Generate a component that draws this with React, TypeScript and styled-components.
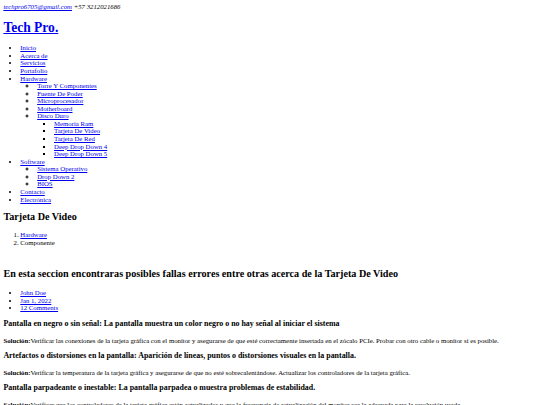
import React from "react";
import styled, { createGlobalStyle } from "styled-components";

const GlobalStyle = createGlobalStyle`
  body {
    margin: 3.4px;
    font-family: "Liberation Serif", "Times New Roman", serif;
    font-size: 6.77px;
    line-height: 1.12;
    color: #000;
    background: #fff;
  }
  a {
    color: #0000ee;
  }
`;

const Contact = styled.address`
  font-style: italic;
`;

const Brand = styled.h1`
  font-size: 2em;
  margin: 0.67em 0;
`;

const Menu = styled.ul`
  margin: 1em 0;
  padding-left: 16.9px;
  list-style: disc;
`;

const SubMenu = styled.ul<{ level: number }>`
  margin: 0;
  padding-left: 16.9px;
  list-style: ${(p) => (p.level === 1 ? "circle" : "square")};
`;

const PageTitle = styled.h2`
  font-size: 1.5em;
  margin: 0.83em 0;
`;

const Breadcrumb = styled.ol`
  margin: 1em 0;
  padding-left: 16.9px;
`;

const Intro = styled.h2`
  font-size: 1.5em;
  margin: 2.17em 0 0.93em;
`;

const MetaList = styled.ul`
  margin: 1em 0;
  padding-left: 16.9px;
`;

const IssueTitle = styled.h3`
  font-size: 1.17em;
  margin: 1em 0;
`;

const Solution = styled.p`
  margin: 1em 0;
`;

type MenuItem = { label: string; children?: MenuItem[] };

const menu: MenuItem[] = [
  { label: "Inicio" },
  { label: "Acerca de" },
  { label: "Servicios" },
  { label: "Portafolio" },
  {
    label: "Hardware",
    children: [
      { label: "Torre Y Componentes" },
      { label: "Fuente De Poder" },
      { label: "Microprocesador" },
      { label: "Motherboard" },
      {
        label: "Disco Duro",
        children: [
          { label: "Memoria Ram" },
          { label: "Tarjeta De Video" },
          { label: "Tarjeta De Red" },
          { label: "Deep Drop Down 4" },
          { label: "Deep Drop Down 5" },
        ],
      },
    ],
  },
  {
    label: "Software",
    children: [
      { label: "Sistema Operativo" },
      { label: "Drop Down 2" },
      { label: "BIOS" },
    ],
  },
  { label: "Contacto" },
  { label: "Electrónica" },
];

const issues = [
  {
    title:
      "Pantalla en negro o sin señal: La pantalla muestra un color negro o no hay señal al iniciar el sistema",
    fix: "Verificar las conexiones de la tarjeta gráfica con el monitor y asegurarse de que esté correctamente insertada en el zócalo PCIe. Probar con otro cable o monitor si es posible.",
  },
  {
    title:
      "Artefactos o distorsiones en la pantalla: Aparición de líneas, puntos o distorsiones visuales en la pantalla.",
    fix: "Verificar la temperatura de la tarjeta gráfica y asegurarse de que no esté sobrecalentándose. Actualizar los controladores de la tarjeta gráfica.",
  },
  {
    title:
      "Pantalla parpadeante o inestable: La pantalla parpadea o muestra problemas de estabilidad.",
    fix: "Verificar que los controladores de la tarjeta gráfica estén actualizados y que la frecuencia de actualización del monitor sea la adecuada para la resolución usada.",
  },
];

const renderMenu = (items: MenuItem[], level: number): React.ReactNode =>
  items.map((item, i) => (
    <li key={level + "_" + i}>
      <a href="#">{item.label}</a>
      {item.children && (
        <SubMenu level={level + 1}>{renderMenu(item.children, level + 1)}</SubMenu>
      )}
    </li>
  ));

const App = () => {
  return (
    <>
      <GlobalStyle />
      <Contact>
        <a href="#">techpro6705@gmail.com</a> +57 3212021686
      </Contact>
      <Brand>
        <a href="#">Tech Pro.</a>
      </Brand>
      <nav>
        <Menu>{renderMenu(menu, 0)}</Menu>
      </nav>
      <PageTitle>Tarjeta De Video</PageTitle>
      <Breadcrumb>
        <li>
          <a href="#">Hardware</a>
        </li>
        <li>Componente</li>
      </Breadcrumb>
      <Intro>
        En esta seccion encontraras posibles fallas errores entre otras acerca de la Tarjeta De Video
      </Intro>
      <MetaList>
        <li>
          <a href="#">John Doe</a>
        </li>
        <li>
          <a href="#">Jan 1, 2022</a>
        </li>
        <li>
          <a href="#">12 Comments</a>
        </li>
      </MetaList>
      {issues.map((issue, i) => (
        <div key={i}>
          <IssueTitle>{issue.title}</IssueTitle>
          <Solution>
            <strong>Solución:</strong>
            {issue.fix}
          </Solution>
        </div>
      ))}
    </>
  );
};

export default App;
